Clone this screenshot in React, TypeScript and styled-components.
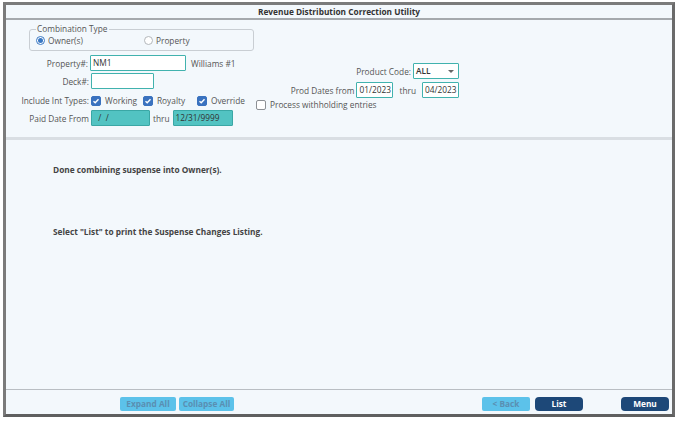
import styled, { createGlobalStyle } from "styled-components";

const GlobalStyle = createGlobalStyle`
  html, body {
    margin: 0;
    padding: 0;
    background: #ffffff;
  }
  body {
    font-family: "Open Sans", "Noto Sans", sans-serif;
    font-size: 8.3px;
    color: #555;
  }
`;

const Frame = styled.div`
  margin: 2px 4px 0 3px;
  width: 666px;
  height: 409px;
  border: 3px solid #7b7b7b;
  border-right-color: #6a6a6a;
  border-bottom-color: #5f5f5f;
  background: #f3f8fc;
  display: flex;
  flex-direction: column;
`;

const TitleBar = styled.div`
  height: 13px;
  line-height: 13px;
  text-align: center;
  font-weight: 700;
  color: #333;
  border-bottom: 2px solid #a5a9ad;
`;

const Form = styled.div`
  height: 117px;
  display: flex;
  padding-left: 14px;
  border-bottom: 3px solid #d9dee3;
`;

const LeftCol = styled.div`
  width: 236px;
  display: flex;
  flex-direction: column;
`;

const RightCol = styled.div`
  width: 203px;
  display: flex;
  flex-direction: column;
  padding-top: 43px;
`;

const Group = styled.fieldset`
  margin: 4px 0 0 9px;
  padding: 0 0 4px 6px;
  width: 217px;
  border: 1px solid #c9ced3;
  border-radius: 3px;
  display: flex;
  align-items: center;
  min-width: 0;
`;

const Legend = styled.legend`
  padding: 0 1px;
  margin-left: 0;
  color: #555;
  line-height: 10px;
`;

const RadioItem = styled.label<{ $w: number }>`
  display: flex;
  align-items: center;
  gap: 3px;
  height: 12px;
  width: ${(p) => p.$w}px;
  color: #555;
`;

const Radio = styled.span<{ $on?: boolean }>`
  width: 9px;
  height: 9px;
  border-radius: 50%;
  box-sizing: border-box;
  border: 1px solid ${(p) => (p.$on ? "#3a78c3" : "#b3b7bb")};
  background: #fff;
  display: flex;
  align-items: center;
  justify-content: center;
  &::after {
    content: "";
    width: 5px;
    height: 5px;
    border-radius: 50%;
    background: ${(p) => (p.$on ? "#3a78c3" : "transparent")};
  }
`;

const Row = styled.div<{ $top: number; $end?: boolean }>`
  display: flex;
  align-items: center;
  white-space: nowrap;
  margin-top: ${(p) => p.$top}px;
  justify-content: ${(p) => (p.$end ? "flex-end" : "flex-start")};
`;

const Label = styled.span<{ $w?: number }>`
  width: ${(p) => (p.$w ? `${p.$w}px` : "auto")};
  text-align: right;
  padding-right: 2px;
  flex-shrink: 0;
  color: #555;
`;

const Input = styled.div<{ $w: number; $fill?: boolean }>`
  width: ${(p) => p.$w}px;
  height: 16px;
  box-sizing: border-box;
  border: 1px solid ${(p) => (p.$fill ? "#3aa7a5" : "#41b2ae")};
  border-radius: 1px;
  background: ${(p) => (p.$fill ? "#52c3c2" : "#ffffff")};
  padding-left: 2px;
  line-height: 14px;
  color: #333;
  flex-shrink: 0;
`;

const Select = styled(Input)`
  display: flex;
  align-items: center;
  justify-content: space-between;
  font-weight: 600;
  padding-right: 4px;
  &::after {
    content: "";
    border-left: 3px solid transparent;
    border-right: 3px solid transparent;
    border-top: 3px solid #666;
  }
`;

const Text = styled.span<{ $ml?: number; $mr?: number }>`
  margin-left: ${(p) => p.$ml ?? 0}px;
  margin-right: ${(p) => p.$mr ?? 0}px;
  color: #555;
`;

const CheckItem = styled.label<{ $w?: number }>`
  display: flex;
  align-items: center;
  gap: 4px;
  width: ${(p) => (p.$w ? `${p.$w}px` : "auto")};
  color: #555;
`;

const Check = styled.span<{ $on?: boolean }>`
  width: 10px;
  height: 10px;
  box-sizing: border-box;
  border-radius: 2px;
  border: 1px solid ${(p) => (p.$on ? "#3a72bf" : "#8c9095")};
  background: ${(p) => (p.$on ? "#3a72bf" : "#fff")};
  display: flex;
  align-items: center;
  justify-content: center;
`;

const Messages = styled.div`
  flex: 1;
  padding: 24px 0 0 47px;
  display: flex;
  flex-direction: column;
  gap: 51px;
  font-weight: 700;
  color: #444;
  border-bottom: 1px solid #b9bec3;
`;

const Footer = styled.div`
  height: 24px;
  display: flex;
  align-items: flex-start;
  padding-top: 7px;
  box-sizing: border-box;
  padding-left: 114px;
`;

const Btn = styled.button<{ $dark?: boolean; $w: number; $ml?: number }>`
  width: ${(p) => p.$w}px;
  height: 14px;
  margin-left: ${(p) => p.$ml ?? 0}px;
  border: none;
  border-radius: ${(p) => (p.$dark ? "4px" : "2px")};
  background: ${(p) => (p.$dark ? "#1d4878" : "#5cc2ea")};
  color: ${(p) => (p.$dark ? "#ffffff" : "#5a8fb2")};
  font-family: inherit;
  font-size: 8.3px;
  font-weight: 700;
  padding: 0;
  line-height: 14px;
  white-space: nowrap;
`;

const Tick = () => (
  <svg width="8" height="8" viewBox="0 0 8 8">
    <path d="M1.5 4.2 L3.2 5.8 L6.5 2.2" fill="none" stroke="#fff" strokeWidth="1.4" />
  </svg>
);

export default function App() {
  return (
    <>
      <GlobalStyle />
      <Frame>
        <TitleBar>Revenue Distribution Correction Utility</TitleBar>
        <Form>
          <LeftCol>
            <Group>
              <Legend>Combination Type</Legend>
              <RadioItem $w={108}>
                <Radio $on />
                Owner(s)
              </RadioItem>
              <RadioItem $w={80}>
                <Radio />
                Property
              </RadioItem>
            </Group>
            <Row $top={4}>
              <Label $w={68}>Property#:</Label>
              <Input $w={96}>NM1</Input>
              <Text $ml={5}>Williams #1</Text>
            </Row>
            <Row $top={2}>
              <Label $w={69}>Deck#:</Label>
              <Input $w={63} />
            </Row>
            <Row $top={6}>
              <Label $w={69}>Include Int Types:</Label>
              <CheckItem $w={52}>
                <Check $on>
                  <Tick />
                </Check>
                Working
              </CheckItem>
              <CheckItem $w={54}>
                <Check $on>
                  <Tick />
                </Check>
                Royalty
              </CheckItem>
              <CheckItem>
                <Check $on>
                  <Tick />
                </Check>
                Override
              </CheckItem>
            </Row>
            <Row $top={4}>
              <Label $w={69}>Paid Date From</Label>
              <Input $w={59} $fill>
                &nbsp;&nbsp;/&nbsp;&nbsp;/
              </Input>
              <Text $ml={3} $mr={3}>
                thru
              </Text>
              <Input $w={60} $fill>
                12/31/9999
              </Input>
            </Row>
          </LeftCol>
          <RightCol>
            <Row $top={0} $end>
              <Label>Product Code:</Label>
              <Select $w={46}>ALL</Select>
            </Row>
            <Row $top={3} $end>
              <Label>Prod Dates from</Label>
              <Input $w={37}>01/2023</Input>
              <Text $ml={6} $mr={6}>
                thru
              </Text>
              <Input $w={37}>04/2023</Input>
            </Row>
            <Row $top={1}>
              <CheckItem>
                <Check />
                Process withholding entries
              </CheckItem>
            </Row>
          </RightCol>
        </Form>
        <Messages>
          <div>Done combining suspense into Owner(s).</div>
          <div>Select "List" to print the Suspense Changes Listing.</div>
        </Messages>
        <Footer>
          <Btn $w={56}>Expand All</Btn>
          <Btn $w={55} $ml={3}>
            Collapse All
          </Btn>
          <Btn $w={48} $ml={248}>
            &lt; Back
          </Btn>
          <Btn $w={48} $ml={5} $dark>
            List
          </Btn>
          <Btn $w={48} $ml={38} $dark>
            Menu
          </Btn>
        </Footer>
      </Frame>
    </>
  );
}
